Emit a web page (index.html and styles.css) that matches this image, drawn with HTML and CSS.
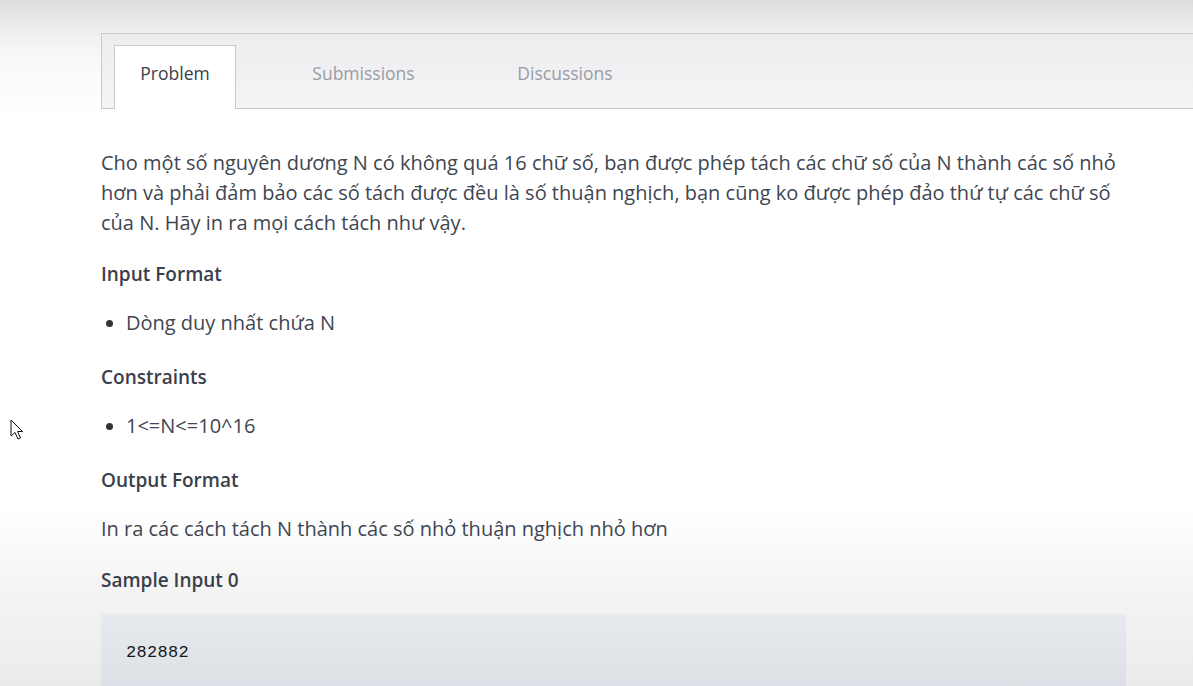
FILE: index.html
```html
<!DOCTYPE html>
<html lang="vi">
<head>
<meta charset="utf-8">
<title>Problem</title>
<link rel="stylesheet" href="styles.css">
</head>
<body>
<div class="page">
  <nav class="tabs">
    <a class="tab active">Problem</a>
    <a class="tab">Submissions</a>
    <a class="tab">Discussions</a>
  </nav>
  <main class="content">
    <p class="text">Cho một số nguyên dương N có không quá 16 chữ số, bạn được phép tách các chữ số của N thành các số nhỏ hơn và phải đảm bảo các số tách được đều là số thuận nghịch, bạn cũng ko được phép đảo thứ tự các chữ số của N. Hãy in ra mọi cách tách như vậy.</p>
    <h3 class="heading">Input Format</h3>
    <ul class="list"><li>Dòng duy nhất chứa N</li></ul>
    <h3 class="heading">Constraints</h3>
    <ul class="list"><li>1&lt;=N&lt;=10^16</li></ul>
    <h3 class="heading">Output Format</h3>
    <p class="text">In ra các cách tách N thành các số nhỏ thuận nghịch nhỏ hơn</p>
    <h3 class="heading">Sample Input 0</h3>
    <pre class="code">282882</pre>
  </main>
</div>
<svg class="cursor" width="14" height="22" viewBox="0 0 14 22"><path d="M1 1 L1 17 L5 13.5 L8 20 L10.5 19 L7.5 12.5 L12.5 12.5 Z" fill="#fff" stroke="#111" stroke-width="1" stroke-linejoin="round"/></svg>
</body>
</html>
```
FILE: styles.css
```css
html, body {
  margin: 0;
  height: 100%;
  overflow: hidden;
}
body {
  font-family: "Open Sans", "Noto Sans", sans-serif;
  color: #404652;
  background: linear-gradient(to bottom, #dcdcdc 0px, #ececec 25px, #f8f8f8 55px, #ffffff 120px, #ffffff 510px, #f5f5f5 580px, #ebebeb 686px);
  position: relative;
}
.page {
  padding: 33px 0 0 101px;
}
.tabs {
  display: flex;
  align-items: flex-end;
  width: 1120px;
  height: 62px;
  padding: 12px 0 0 12px;
  border: 1px solid #c9c9c9;
  border-right: none;
  background: linear-gradient(to bottom, #ededef, #f4f4f6);
  box-sizing: content-box;
}
.tab {
  display: flex;
  align-items: center;
  justify-content: center;
  height: 62px;
  padding-bottom: 9px;
  box-sizing: border-box;
  font-size: 17.5px;
  color: #989ca6;
  text-decoration: none;
}
.tab:nth-child(2) { width: 255px; }
.tab:nth-child(3) { width: 148px; }
.tab.active {
  width: 122px;
  height: 64px;
  margin-bottom: -1px;
  padding-bottom: 10px;
  background: #fff;
  border: 1px solid #c9c9c9;
  border-bottom: none;
  color: #39414c;
}
.content {
  width: 1025px;
  padding-top: 39px;
}
.text {
  margin: 0 0 21px;
  font-size: 20px;
  line-height: 30px;
}
.heading {
  margin: 0 0 19px;
  font-size: 19px;
  line-height: 30px;
  font-weight: 600;
  color: #3a404b;
}
.list {
  margin: 0 0 24px;
  padding-left: 25px;
  font-size: 20px;
  line-height: 30px;
}
.list li::marker { color: #333; font-size: 19px; }
.code {
  margin: 15px 0 0;
  padding: 29px 25px 40px;
  font-family: "Liberation Mono", "DejaVu Sans Mono", monospace;
  font-size: 17px;
  line-height: 20px;
  letter-spacing: 0.3px;
  color: #15181c;
  background: linear-gradient(to bottom, #e7eaee, #dadde3);
}
.cursor {
  position: absolute;
  left: 10px;
  top: 419px;
}
```
